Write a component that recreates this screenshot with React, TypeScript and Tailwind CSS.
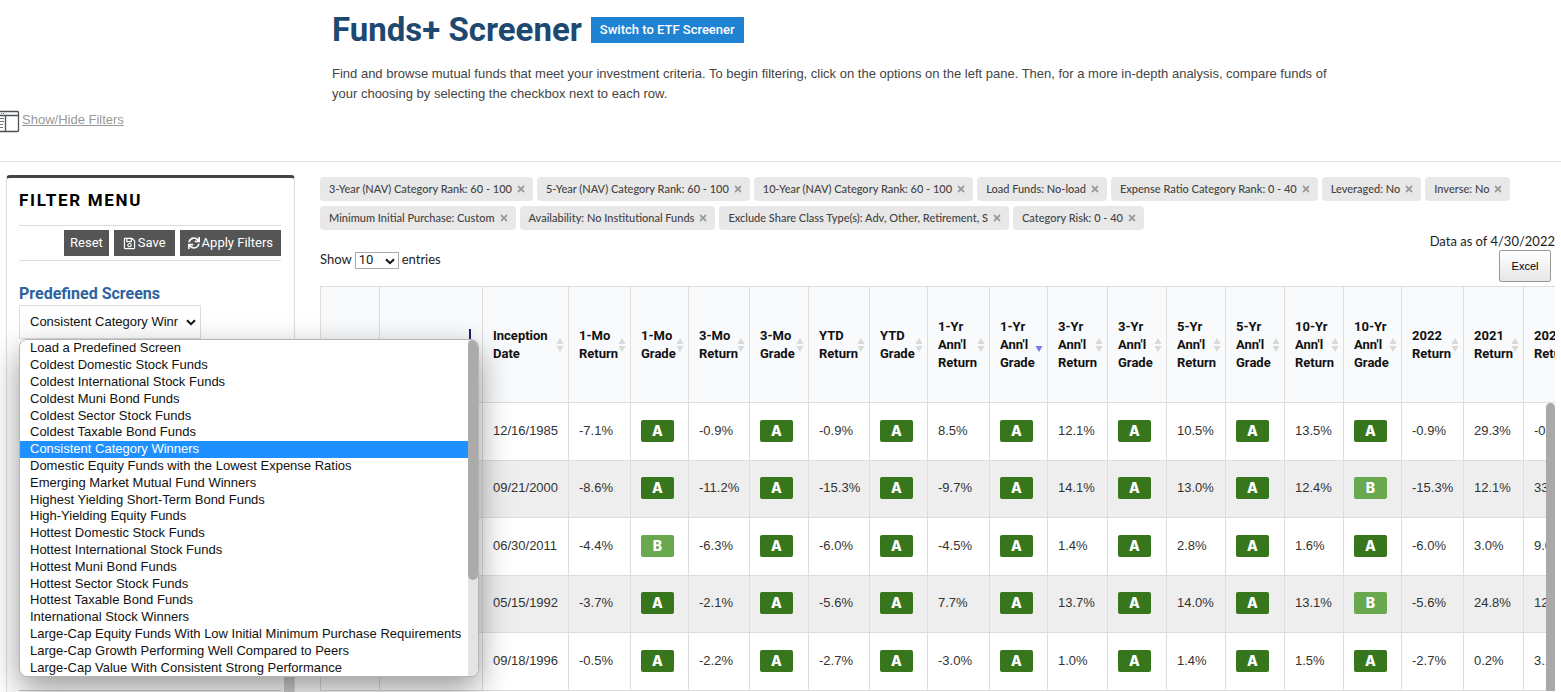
import { FaRegSave, FaSync, FaTimes } from 'react-icons/fa';

type Column = { lines: string[]; width: string; sort?: 'none' | 'desc' };

const columns: Column[] = [
  { lines: ['Inception', 'Date'], width: 'w-[86px]' },
  { lines: ['1-Mo', 'Return'], width: 'w-[62px]' },
  { lines: ['1-Mo', 'Grade'], width: 'w-[58px]' },
  { lines: ['3-Mo', 'Return'], width: 'w-[61px]' },
  { lines: ['3-Mo', 'Grade'], width: 'w-[59px]' },
  { lines: ['YTD', 'Return'], width: 'w-[61px]' },
  { lines: ['YTD', 'Grade'], width: 'w-[58px]' },
  { lines: ['1-Yr', "Ann'l", 'Return'], width: 'w-[62px]' },
  { lines: ['1-Yr', "Ann'l", 'Grade'], width: 'w-[58px]', sort: 'desc' },
  { lines: ['3-Yr', "Ann'l", 'Return'], width: 'w-[60px]' },
  { lines: ['3-Yr', "Ann'l", 'Grade'], width: 'w-[59px]' },
  { lines: ['5-Yr', "Ann'l", 'Return'], width: 'w-[59px]' },
  { lines: ['5-Yr', "Ann'l", 'Grade'], width: 'w-[59px]' },
  { lines: ['10-Yr', "Ann'l", 'Return'], width: 'w-[59px]' },
  { lines: ['10-Yr', "Ann'l", 'Grade'], width: 'w-[58px]' },
  { lines: ['2022', 'Return'], width: 'w-[62px]' },
  { lines: ['2021', 'Return'], width: 'w-[60px]' },
  { lines: ['2020', 'Return'], width: 'w-[62px]' },
];

const rows = [
  ['12/16/1985', '-7.1%', 'A', '-0.9%', 'A', '-0.9%', 'A', '8.5%', 'A', '12.1%', 'A', '10.5%', 'A', '13.5%', 'A', '-0.9%', '29.3%', '-0.9%'],
  ['09/21/2000', '-8.6%', 'A', '-11.2%', 'A', '-15.3%', 'A', '-9.7%', 'A', '14.1%', 'A', '13.0%', 'A', '12.4%', 'B', '-15.3%', '12.1%', '33.1%'],
  ['06/30/2011', '-4.4%', 'B', '-6.3%', 'A', '-6.0%', 'A', '-4.5%', 'A', '1.4%', 'A', '2.8%', 'A', '1.6%', 'A', '-6.0%', '3.0%', '9.0%'],
  ['05/15/1992', '-3.7%', 'A', '-2.1%', 'A', '-5.6%', 'A', '7.7%', 'A', '13.7%', 'A', '14.0%', 'A', '13.1%', 'B', '-5.6%', '24.8%', '12.1%'],
  ['09/18/1996', '-0.5%', 'A', '-2.2%', 'A', '-2.7%', 'A', '-3.0%', 'A', '1.0%', 'A', '1.4%', 'A', '1.5%', 'A', '-2.7%', '0.2%', '3.1%'],
];

const chips = [
  '3-Year (NAV) Category Rank: 60 - 100',
  '5-Year (NAV) Category Rank: 60 - 100',
  '10-Year (NAV) Category Rank: 60 - 100',
  'Load Funds: No-load',
  'Expense Ratio Category Rank: 0 - 40',
  'Leveraged: No',
  'Inverse: No',
  'Minimum Initial Purchase: Custom',
  'Availability: No Institutional Funds',
  'Exclude Share Class Type(s): Adv, Other, Retirement, S',
  'Category Risk: 0 - 40',
];

const screens = [
  'Load a Predefined Screen',
  'Coldest Domestic Stock Funds',
  'Coldest International Stock Funds',
  'Coldest Muni Bond Funds',
  'Coldest Sector Stock Funds',
  'Coldest Taxable Bond Funds',
  'Consistent Category Winners',
  'Domestic Equity Funds with the Lowest Expense Ratios',
  'Emerging Market Mutual Fund Winners',
  'Highest Yielding Short-Term Bond Funds',
  'High-Yielding Equity Funds',
  'Hottest Domestic Stock Funds',
  'Hottest International Stock Funds',
  'Hottest Muni Bond Funds',
  'Hottest Sector Stock Funds',
  'Hottest Taxable Bond Funds',
  'International Stock Winners',
  'Large-Cap Equity Funds With Low Initial Minimum Purchase Requirements',
  'Large-Cap Growth Performing Well Compared to Peers',
  'Large-Cap Value With Consistent Strong Performance',
];

function Chevron({ className }: { className: string }) {
  return (
    <svg viewBox="0 0 10 7" className={`pointer-events-none absolute h-[7px] w-[10px] ${className}`} fill="none" stroke="#111" strokeWidth="2">
      <path d="M1 1.2 5 5.2 9 1.2" />
    </svg>
  );
}

function SortIcon({ sort = 'none' }: { sort?: 'none' | 'desc' }) {
  return (
    <svg viewBox="0 0 8 14" className="absolute top-1/2 right-1 h-[14px] w-2 -translate-y-1/2">
      {sort === 'none' && <path d="M4 0 7.5 6H.5Z" fill="#d9d9d9" />}
      <path d="M4 14 .5 8h7Z" fill={sort === 'desc' ? '#7a7ae6' : '#d9d9d9'} />
    </svg>
  );
}

function Grade({ value }: { value: string }) {
  return (
    <span className={`flex h-[22px] w-[33px] items-center justify-center rounded-xs font-['Inter',sans-serif] text-sm font-extrabold text-white ${value === 'A' ? 'bg-[#38761d]' : 'bg-[#6aa84f]'}`}>
      {value}
    </span>
  );
}

function Header() {
  return (
    <header className="flex h-[162px] shrink-0 border-b border-[#e2e2e2]">
      <div className="flex w-[332px] shrink-0 items-start pt-[110px]">
        <svg viewBox="0 0 20 23" className="h-[23px] w-5" fill="none" stroke="#4a5258">
          <rect x="-4" y="1.5" width="22.5" height="20" rx="1" strokeWidth="1.3" />
          <path d="M0 5.5h18.5M5.5 5.5v16" strokeWidth="1.3" />
          <path d="M0 8.5h4M0 11.5h4M0 14.5h3M0 17.5h3M1 3.5h1M3 3.5h1" strokeWidth=".8" />
        </svg>
        <a href="#filters" className="ml-[2px] font-['Liberation_Sans',Arial,sans-serif] text-[13px] leading-5 text-[#999] underline">Show/Hide Filters</a>
      </div>
      <div className="max-w-[1000px] pt-[10px]">
        <div className="flex items-center gap-[9px]">
          <h1 className="text-[33px] leading-10 font-bold text-[#1d4870]">Funds+ Screener</h1>
          <button type="button" className="h-[26px] bg-[#1f82d2] px-[9px] text-[13px] leading-5 font-medium text-white">Switch to ETF Screener</button>
        </div>
        <p className="mt-[14px] font-['Liberation_Sans',Arial,sans-serif] text-[13px] leading-5 text-[#444]">
          Find and browse mutual funds that meet your investment criteria. To begin filtering, click on the options on the left pane. Then, for a more in-depth analysis, compare funds of your choosing by selecting the checkbox next to each row.
        </p>
      </div>
    </header>
  );
}

function ScreenMenu() {
  return (
    <div className="absolute top-full left-0 z-20 flex overflow-hidden rounded-lg border border-[#b5b5b5] bg-white shadow-[0_12px_32px_rgba(0,0,0,0.4)]">
      <ul role="listbox" aria-label="Predefined Screens" className="font-['Liberation_Sans',Arial,sans-serif] text-[13px]">
        {screens.map((name) => (
          <li
            key={name}
            role="option"
            aria-selected={name === 'Consistent Category Winners'}
            className="h-[17px] w-[448px] pl-[10px] leading-4 whitespace-nowrap text-[#111] nth-[5n]:h-4 aria-selected:bg-[#1e90ff] aria-selected:text-white"
          >
            {name}
          </li>
        ))}
      </ul>
      <div className="w-[10px] bg-[#e4e4e4]"><div className="h-[240px] rounded-full bg-[#ababab]" /></div>
    </div>
  );
}

function FilterMenu() {
  return (
    <aside id="filters" className="relative ml-[6px] flex w-[289px] shrink-0 flex-col rounded-t-sm border-x border-t-[3px] border-x-[#ddd] border-t-[#444] pr-[13px] pl-3">
      <h2 className="pt-[10px] text-[17px] leading-6 font-bold tracking-widest text-black">FILTER MENU</h2>
      <div className="mt-[13px] flex justify-end gap-[5px] border-y border-[#ddd] py-1 text-[13px] leading-6 text-white">
        <button type="button" className="h-[26px] bg-[#555] px-[6px]">Reset</button>
        <button type="button" className="flex h-[26px] items-center gap-[2px] bg-[#555] px-[9px]"><FaRegSave className="size-[13px]" />Save</button>
        <button type="button" className="flex h-[26px] items-center gap-[2px] bg-[#555] px-2"><FaSync className="size-3" />Apply Filters</button>
      </div>
      <label htmlFor="screen" className="mt-[22px] text-base leading-[22px] font-bold text-[#2c62a0]">Predefined Screens</label>
      <div className="relative w-[182px]">
        <select id="screen" defaultValue="Consistent Category Winners" className="h-[34px] w-full appearance-none border border-[#ddd] bg-white pr-[22px] pl-[10px] font-['Liberation_Sans',Arial,sans-serif] text-[13px] text-[#111]">
          {screens.map((name) => <option key={name}>{name}</option>)}
        </select>
        <Chevron className="top-[14px] right-[5px]" />
        <ScreenMenu />
      </div>
      <div className="mt-auto mb-px h-[350px] border-b border-[#ccc]" />
      <div className="absolute right-0 bottom-0 h-[300px] w-[10px] bg-[#d0d0d0]" />
    </aside>
  );
}

function FundTable() {
  return (
    <div className="relative overflow-hidden">
      <table className="w-[1265px] table-fixed border-collapse text-left text-[13px] text-[#333]">
        <thead className="bg-[#f9fafc] text-[#111]">
          <tr className="h-[116px]">
            <th className="w-[59px] border border-[#ddd]" />
            <th className="relative w-[103px] border border-[#ddd]"><span className="absolute top-[42px] right-[11px] h-8 w-[2px] bg-[#22206e]" /></th>
            {columns.map((column) => (
              <th key={column.lines.join(' ')} scope="col" className={`relative border border-[#ddd] pl-[10px] leading-[18px] font-bold ${column.width}`}>
                {column.lines.map((line) => <span key={line} className="block whitespace-nowrap">{line}</span>)}
                <SortIcon sort={column.sort} />
              </th>
            ))}
          </tr>
        </thead>
        <tbody className="font-['Liberation_Sans',Arial,sans-serif]">
          {rows.map((row) => (
            <tr key={row[0]} className="h-[57px] odd:h-[58px] even:bg-[#eee]">
              <td className="border border-[#ddd]" />
              <td className="border border-[#ddd]" />
              {row.map((value, i) => (
                <td key={i} className="border border-[#ddd] pb-[2px] pl-[10px] whitespace-nowrap">
                  {value === 'A' || value === 'B' ? <Grade value={value} /> : value}
                </td>
              ))}
            </tr>
          ))}
        </tbody>
      </table>
      <div className="absolute top-[117px] right-0 bottom-0 w-[9px] rounded-t-full bg-[#a9a9a9]" />
    </div>
  );
}

export default function App() {
  return (
    <div className="flex h-screen flex-col overflow-hidden bg-white font-['Roboto',sans-serif]">
      <Header />
      <div className="flex min-h-0 flex-1 gap-[25px] pt-[13px]">
        <FilterMenu />
        <main className="mr-[6px] min-w-0 flex-1 pt-[2px] font-['Lato',sans-serif]">
          <div className="flex flex-wrap gap-x-1 gap-y-[5px]">
            {chips.map((chip) => (
              <span key={chip} className="flex h-6 items-center gap-1 rounded-sm bg-[#e8e8e8] pr-[7px] pl-[9px] text-[11px] font-medium text-[#444]">
                {chip}
                <button type="button" aria-label={`Remove ${chip}`} className="text-[#999]"><FaTimes className="size-[10px]" /></button>
              </span>
            ))}
          </div>
          <div className="flex justify-between text-[13px] text-[#222]">
            <label className="mt-5 flex h-5 items-center gap-[3px]">
              Show
              <span className="relative">
                <select defaultValue="10" className="block h-[17px] w-11 appearance-none border border-[#aaa] bg-white pl-[3px] text-[13px] leading-[14px] font-['Roboto',sans-serif]">
                  <option>10</option>
                  <option>25</option>
                  <option>50</option>
                </select>
                <Chevron className="top-[6px] right-1" />
              </span>
              entries
            </label>
            <div className="flex flex-col items-end">
              <p className="mt-[2px] leading-[18px]">Data as of 4/30/2022</p>
              <button type="button" className="mr-1 mb-1 h-8 w-[52px] rounded-xs border border-[#999] bg-linear-to-b from-white to-[#e6e6e6] font-['Liberation_Sans',Arial,sans-serif] text-[11px] text-black">Excel</button>
            </div>
          </div>
          <div className="font-['Roboto',sans-serif]"><FundTable /></div>
        </main>
      </div>
    </div>
  );
}
